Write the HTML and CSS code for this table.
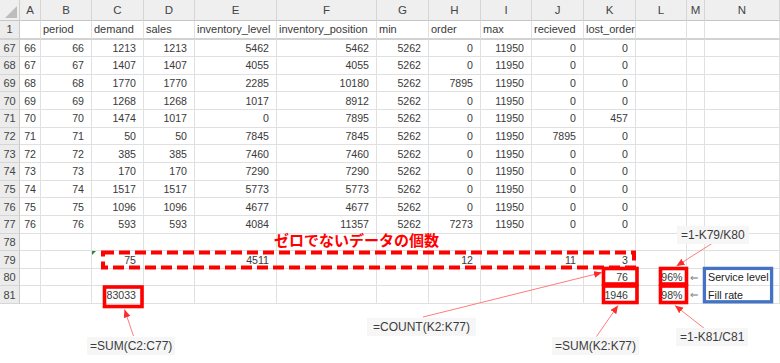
FILE: index.html
```html
<!DOCTYPE html>
<html lang="ja">
<head>
<meta charset="utf-8">
<title>在庫シミュレーション</title>
<link rel="stylesheet" href="styles.css">
</head>
<body>
<div class="page">
  <div class="sheet">
    <div class="row hdr">
      <div class="corner"><span class="tri"></span></div>
      <div class="ch">A</div><div class="ch">B</div><div class="ch">C</div><div class="ch">D</div><div class="ch">E</div><div class="ch">F</div><div class="ch">G</div><div class="ch">H</div><div class="ch">I</div><div class="ch">J</div><div class="ch">K</div><div class="ch">L</div><div class="ch">M</div><div class="ch">N</div>
    </div>
    <div class="row r1">
      <div class="rh">1</div><div class="c"></div><div class="c t">period</div><div class="c t">demand</div><div class="c t">sales</div><div class="c t">inventory_level</div><div class="c t">inventory_position</div><div class="c t">min</div><div class="c t">order</div><div class="c t">max</div><div class="c t">recieved</div><div class="c t">lost_order</div><div class="c"></div><div class="c"></div><div class="c"></div>
    </div>
    <div class="row">
      <div class="rh">67</div><div class="c a">66</div><div class="c">66</div><div class="c">1213</div><div class="c">1213</div><div class="c">5462</div><div class="c">5462</div><div class="c">5262</div><div class="c">0</div><div class="c">11950</div><div class="c">0</div><div class="c">0</div><div class="c"></div><div class="c"></div><div class="c"></div>
    </div>
    <div class="row">
      <div class="rh">68</div><div class="c a">67</div><div class="c">67</div><div class="c">1407</div><div class="c">1407</div><div class="c">4055</div><div class="c">4055</div><div class="c">5262</div><div class="c">0</div><div class="c">11950</div><div class="c">0</div><div class="c">0</div><div class="c"></div><div class="c"></div><div class="c"></div>
    </div>
    <div class="row">
      <div class="rh">69</div><div class="c a">68</div><div class="c">68</div><div class="c">1770</div><div class="c">1770</div><div class="c">2285</div><div class="c">10180</div><div class="c">5262</div><div class="c">7895</div><div class="c">11950</div><div class="c">0</div><div class="c">0</div><div class="c"></div><div class="c"></div><div class="c"></div>
    </div>
    <div class="row">
      <div class="rh">70</div><div class="c a">69</div><div class="c">69</div><div class="c">1268</div><div class="c">1268</div><div class="c">1017</div><div class="c">8912</div><div class="c">5262</div><div class="c">0</div><div class="c">11950</div><div class="c">0</div><div class="c">0</div><div class="c"></div><div class="c"></div><div class="c"></div>
    </div>
    <div class="row">
      <div class="rh">71</div><div class="c a">70</div><div class="c">70</div><div class="c">1474</div><div class="c">1017</div><div class="c">0</div><div class="c">7895</div><div class="c">5262</div><div class="c">0</div><div class="c">11950</div><div class="c">0</div><div class="c">457</div><div class="c"></div><div class="c"></div><div class="c"></div>
    </div>
    <div class="row">
      <div class="rh">72</div><div class="c a">71</div><div class="c">71</div><div class="c">50</div><div class="c">50</div><div class="c">7845</div><div class="c">7845</div><div class="c">5262</div><div class="c">0</div><div class="c">11950</div><div class="c">7895</div><div class="c">0</div><div class="c"></div><div class="c"></div><div class="c"></div>
    </div>
    <div class="row">
      <div class="rh">73</div><div class="c a">72</div><div class="c">72</div><div class="c">385</div><div class="c">385</div><div class="c">7460</div><div class="c">7460</div><div class="c">5262</div><div class="c">0</div><div class="c">11950</div><div class="c">0</div><div class="c">0</div><div class="c"></div><div class="c"></div><div class="c"></div>
    </div>
    <div class="row">
      <div class="rh">74</div><div class="c a">73</div><div class="c">73</div><div class="c">170</div><div class="c">170</div><div class="c">7290</div><div class="c">7290</div><div class="c">5262</div><div class="c">0</div><div class="c">11950</div><div class="c">0</div><div class="c">0</div><div class="c"></div><div class="c"></div><div class="c"></div>
    </div>
    <div class="row">
      <div class="rh">75</div><div class="c a">74</div><div class="c">74</div><div class="c">1517</div><div class="c">1517</div><div class="c">5773</div><div class="c">5773</div><div class="c">5262</div><div class="c">0</div><div class="c">11950</div><div class="c">0</div><div class="c">0</div><div class="c"></div><div class="c"></div><div class="c"></div>
    </div>
    <div class="row">
      <div class="rh">76</div><div class="c a">75</div><div class="c">75</div><div class="c">1096</div><div class="c">1096</div><div class="c">4677</div><div class="c">4677</div><div class="c">5262</div><div class="c">0</div><div class="c">11950</div><div class="c">0</div><div class="c">0</div><div class="c"></div><div class="c"></div><div class="c"></div>
    </div>
    <div class="row">
      <div class="rh">77</div><div class="c a">76</div><div class="c">76</div><div class="c">593</div><div class="c">593</div><div class="c">4084</div><div class="c">11357</div><div class="c">5262</div><div class="c">7273</div><div class="c">11950</div><div class="c">0</div><div class="c">0</div><div class="c"></div><div class="c"></div><div class="c"></div>
    </div>
    <div class="row">
      <div class="rh">78</div><div class="c"></div><div class="c"></div><div class="c"></div><div class="c"></div><div class="c"></div><div class="c"></div><div class="c"></div><div class="c"></div><div class="c"></div><div class="c"></div><div class="c"></div><div class="c"></div><div class="c"></div><div class="c"></div>
    </div>
    <div class="row">
      <div class="rh">79</div><div class="c"></div><div class="c"></div><div class="c err">75</div><div class="c"></div><div class="c">4511</div><div class="c"></div><div class="c"></div><div class="c">12</div><div class="c"></div><div class="c">11</div><div class="c">3</div><div class="c"></div><div class="c"></div><div class="c"></div>
    </div>
    <div class="row">
      <div class="rh">80</div><div class="c"></div><div class="c"></div><div class="c"></div><div class="c"></div><div class="c"></div><div class="c"></div><div class="c"></div><div class="c"></div><div class="c"></div><div class="c"></div><div class="c">76</div><div class="c pct">96%</div><div class="c arr">⇐</div><div class="c lbl">Service level</div>
    </div>
    <div class="row">
      <div class="rh">81</div><div class="c"></div><div class="c"></div><div class="c">83033</div><div class="c"></div><div class="c"></div><div class="c"></div><div class="c"></div><div class="c"></div><div class="c"></div><div class="c"></div><div class="c">1946</div><div class="c pct">98%</div><div class="c arr">⇐</div><div class="c lbl">Fill rate</div>
    </div>
  </div>

  <div class="note">ゼロでないデータの個数</div>

  <svg class="marks" width="780" height="363" viewBox="0 0 780 363">
    <defs>
      <marker id="ah" markerUnits="userSpaceOnUse" markerWidth="8" markerHeight="7" refX="8" refY="3.5" orient="auto">
        <path class="ahead" d="M0,0 L8,3.5 L0,7 Z"/>
      </marker>
    </defs>
    <rect class="dash" x="103" y="252.5" width="531" height="15"/>
    <rect class="box" x="104.5" y="287" width="37.5" height="19.5"/>
    <rect class="box" x="603.5" y="268.5" width="33.5" height="15.5"/>
    <rect class="box" x="603.5" y="286" width="33.5" height="16.5"/>
    <rect class="box" x="660.5" y="268.5" width="26" height="15.5"/>
    <rect class="box" x="660.5" y="286" width="26" height="16.5"/>
    <rect class="bbox" x="704.4" y="268.4" width="67.2" height="33.4"/>
    <line class="arw" x1="133.5" y1="336" x2="124.5" y2="309.5" marker-end="url(#ah)"/>
    <line class="arw" x1="423" y1="317" x2="602" y2="272.5" marker-end="url(#ah)"/>
    <line class="arw" x1="596.5" y1="336.5" x2="618" y2="305.5" marker-end="url(#ah)"/>
    <line class="arw" x1="713.5" y1="242.5" x2="676.5" y2="266" marker-end="url(#ah)"/>
    <line class="arw" x1="705" y1="329" x2="675" y2="305.5" marker-end="url(#ah)"/>
  </svg>

  <div class="label lb-svc">=1-K79/K80</div>
  <div class="label lb-count">=COUNT(K2:K77)</div>
  <div class="label lb-sumc">=SUM(C2:C77)</div>
  <div class="label lb-sumk">=SUM(K2:K77)</div>
  <div class="label lb-fill">=1-K81/C81</div>
</div>
</body>
</html>
```

FILE: styles.css
```css
* { box-sizing: border-box; }
html, body { margin: 0; padding: 0; background: #ffffff; }

.page {
  position: relative;
  width: 780px;
  height: 363px;
  overflow: hidden;
  background: #ffffff;
  font-family: "Liberation Sans", Arial, sans-serif;
}

.sheet {
  display: grid;
  grid-template-columns: 20px 21px 51px 52px 51px 82px 100px 52px 52px 51px 52px 52px 51px 18px 75px;
  grid-template-rows: 21px 18.5px repeat(15, 17.65px);
  font-size: 10.6px;
  color: #3a3a3a;
}

.row { display: contents; }

.corner {
  background: #efefef;
  border-right: 1px solid #cfcfcf;
  border-bottom: 1px solid #c6c6c6;
  display: flex;
  align-items: flex-end;
  justify-content: flex-end;
  padding: 0 2px 2px 0;
}
.tri {
  width: 0;
  height: 0;
  border-left: 12px solid transparent;
  border-bottom: 12px solid #bdbdbd;
}

.ch {
  background: #efefef;
  border-right: 1px solid #d6d6d6;
  border-bottom: 1px solid #c6c6c6;
  text-align: center;
  line-height: 20px;
  font-size: 11.5px;
  color: #444;
}

.rh {
  background: #ececec;
  border-right: 1px solid #c9c9c9;
  border-bottom: 1px solid #d6d6d6;
  display: flex;
  align-items: center;
  justify-content: center;
  font-size: 11px;
  color: #444;
}

.c {
  position: relative;
  border-right: 1px solid #e0e0e0;
  border-bottom: 1px solid #e0e0e0;
  display: flex;
  align-items: center;
  justify-content: flex-end;
  padding-right: 7px;
  white-space: nowrap;
}

.r1 .c, .r1 .rh { border-bottom: 2px solid #d2d2d2; }

.c.t { justify-content: flex-start; padding-left: 2px; padding-right: 0; font-size: 11px; }
.c.a { padding-right: 4px; }
.c.pct { padding-right: 3.5px; }
.c.arr { justify-content: flex-start; padding-left: 3px; padding-right: 0; font-size: 10px; color: #777; font-family: "DejaVu Sans", sans-serif; }
.c.lbl { justify-content: flex-start; padding-left: 3px; padding-right: 0; font-size: 10.7px; color: #222; }

.c.err::before {
  content: "";
  position: absolute;
  left: 0;
  top: 0;
  width: 0;
  height: 0;
  border-top: 4px solid #1f8a3a;
  border-right: 4px solid transparent;
}

.note {
  position: absolute;
  left: 274px;
  top: 231px;
  font-family: "Noto Sans CJK JP", sans-serif;
  font-weight: 700;
  font-size: 15px;
  line-height: 18px;
  color: #ff0000;
  white-space: nowrap;
}

.marks {
  position: absolute;
  left: 0;
  top: 0;
  pointer-events: none;
}
.dash { fill: none; stroke: #ff0000; stroke-width: 4; stroke-dasharray: 11 5; }
.box { fill: none; stroke: #ff0000; stroke-width: 3.6; }
.bbox { fill: none; stroke: #4472c4; stroke-width: 3.3; }
.arw { stroke: #ff7c7c; stroke-width: 1; }
.ahead { fill: #ff2a2a; }

.label {
  position: absolute;
  background: #f6f6f6;
  font-size: 12px;
  line-height: 18px;
  color: #3c3c3c;
  white-space: nowrap;
  padding: 0 4px;
}
.lb-svc { left: 677px; top: 226px; }
.lb-count { left: 367px; top: 318px; padding: 0 6px; }
.lb-sumc { left: 87px; top: 337px; padding: 0 3px; }
.lb-sumk { left: 552px; top: 337px; padding: 0 3px; }
.lb-fill { left: 676px; top: 328px; }
```
